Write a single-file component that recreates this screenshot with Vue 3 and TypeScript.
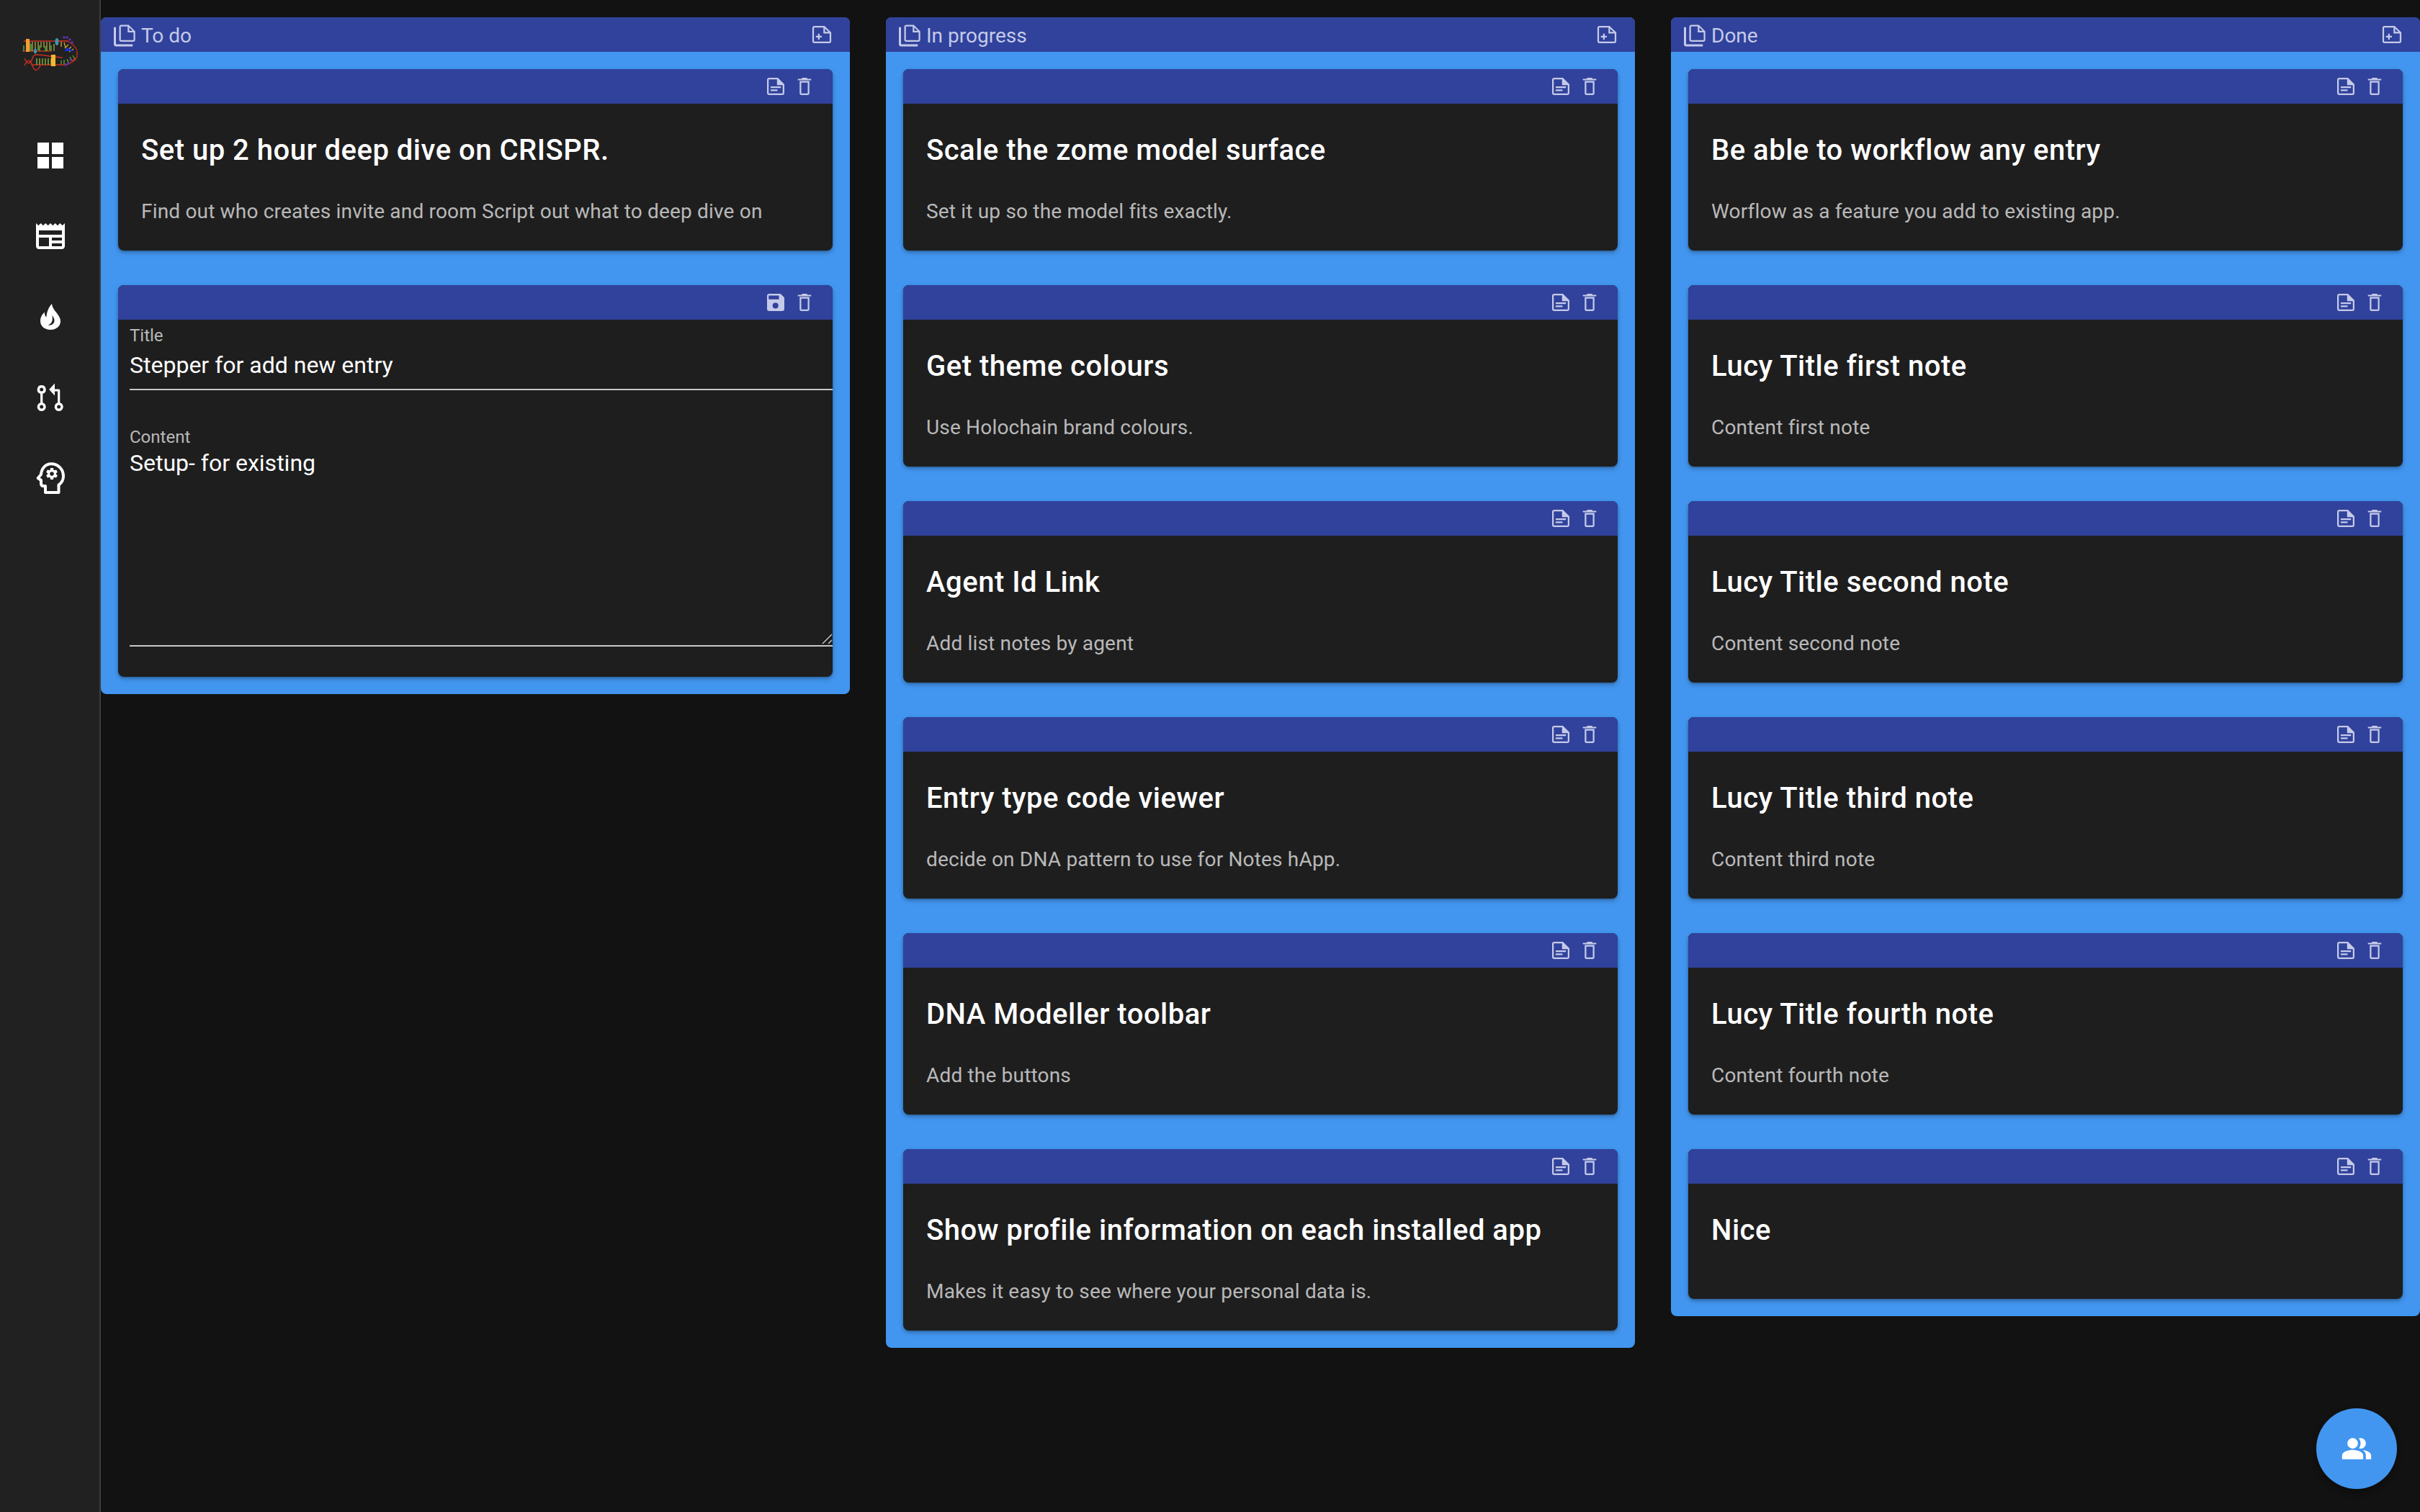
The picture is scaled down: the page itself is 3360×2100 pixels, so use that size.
<script setup lang="ts">
interface Note {
  title: string;
  content: string;
  editing?: boolean;
}
interface Column {
  name: string;
  notes: Note[];
}

const columns: Column[] = [
  {
    name: "To do",
    notes: [
      {
        title: "Set up 2 hour deep dive on CRISPR.",
        content: "Find out who creates invite and room Script out what to deep dive on",
      },
      { title: "Stepper for add new entry", content: "Setup- for existing", editing: true },
    ],
  },
  {
    name: "In progress",
    notes: [
      { title: "Scale the zome model surface", content: "Set it up so the model fits exactly." },
      { title: "Get theme colours", content: "Use Holochain brand colours." },
      { title: "Agent Id Link", content: "Add list notes by agent" },
      { title: "Entry type code viewer", content: "decide on DNA pattern to use for Notes hApp." },
      { title: "DNA Modeller toolbar", content: "Add the buttons" },
      {
        title: "Show profile information on each installed app",
        content: "Makes it easy to see where your personal data is.",
      },
    ],
  },
  {
    name: "Done",
    notes: [
      { title: "Be able to workflow any entry", content: "Worflow as a feature you add to existing app." },
      { title: "Lucy Title first note", content: "Content first note" },
      { title: "Lucy Title second note", content: "Content second note" },
      { title: "Lucy Title third note", content: "Content third note" },
      { title: "Lucy Title fourth note", content: "Content fourth note" },
      { title: "Nice", content: "" },
    ],
  },
];

const gridIcon = "M3 3h8v8H3zM13 3h8v8h-8zM3 13h8v8H3zM13 13h8v8h-8z";
const feedIcon =
  "M22 3l-1.67 1.67L18.67 3 17 4.67 15.33 3l-1.66 1.67L12 3l-1.67 1.67L8.67 3 7 4.67 5.33 3 3.67 4.67 2 3v16c0 1.1.9 2 2 2h16c1.1 0 2-.9 2-2V3zM11 19H4v-6h7v6zm9 0h-7v-2h7v2zm0-4h-7v-2h7v2zm0-4H4V8h16v3z";
const flameIcon =
  "M13 3c.4 3 2 4.5 3.5 6.5 1.500 2 2.500 3.700 2.500 5.500 0 3.600-3 6-7 6s-7-2.500-7-6c0-2.800 1.300-4.800 3-6.300-.2 1.500.3 2.800 1.200 3.500C9.500 8.600 10.800 5.200 13 3zM13.200 11c.2 1.200.3 2.300.1 3.500-.3 1.600-1.400 2.700-3 3.400 2.200.2 4.100-1 4.400-2.700.3-1.500-.5-2.900-1.500-4.200z";
const mergeIcon =
  "M5.850 3.500a3 3 0 0 0-.8 5.890v6.220a3 3 0 1 0 1.600 0V9.390a3 3 0 0 0-.8-5.890zm0 1.750a1.250 1.250 0 1 1 0 2.500 1.250 1.250 0 0 1 0-2.500zm0 12a1.250 1.250 0 1 1 0 2.500 1.250 1.250 0 0 1 0-2.500zM15 2.300L11.100 6.500 15 10.700V7.800h2.050v7.810a3 3 0 1 0 1.600 0V7.300c0-.7-.5-1-1-1H15zm2.850 14.950a1.250 1.250 0 1 1 0 2.500 1.250 1.250 0 0 1 0-2.500z";
const gearIcon =
  "M15.820 7.220l-1 .4c-.21-.16-.43-.29-.67-.39L14 6.170c-.02-.1-.1-.17-.2-.17h-1.600c-.1 0-.18.07-.19.17l-.15 1.060c-.24.1-.47.23-.67.39l-1-.4c-.09-.03-.2 0-.24.09l-.8 1.380c-.05.09-.03.2.05.26l.85.66c-.03.12-.05.26-.05.39s.01.26.03.39l-.84.66c-.08.06-.1.17-.05.25l.8 1.390c.05.09.15.12.25.09l.99-.4c.21.16.43.29.68.39l.14 1.060c.02.1.1.17.2.17h1.600c.1 0 .18-.07.2-.17l.15-1.060c.24-.1.47-.23.67-.39l.99.4c.09.04.2 0 .24-.09l.8-1.390c.05-.09.03-.19-.05-.25l-.83-.66c.02-.13.02-.26.02-.39 0-.14-.01-.27-.03-.39l.85-.66c.08-.06.1-.17.05-.26l-.8-1.380c-.05-.09-.16-.12-.25-.09zM13 11.430c-.79 0-1.430-.64-1.430-1.430s.64-1.430 1.430-1.430 1.430.64 1.430 1.430-.64 1.430-1.430 1.430z";
const headOutline =
  "M17 44V35h-3c-2 0-3-1.500-3-4v-4l-4.300-3L11 19c.5-8 6-14.700 14-14.700 9.500 0 17 7.200 17 17.200 0 5.500-3 9.500-6.500 12V44z";

const copyIcon =
  "M2 4.500h2v15.800h15.500v2H4c-1.100 0-2-.9-2-2zM15.800 2.300l6 6V16a2 2 0 0 1-2 2H9a2 2 0 0 1-2-2V4.300a2 2 0 0 1 2-2zM8.500 3.800v12.700h11.800V9.300h-5.500V3.800zM16.300 4.600v3.200h3.200z";
const addIcon =
  "M14.500 4l6.250 6v8a2 2 0 0 1-2 2H5.250a2 2 0 0 1-2-2V6a2 2 0 0 1 2-2zM4.750 5.500v13h14.500V11H13.500V5.500zM15 6.500v3h3.200zM8.500 11.200H10v2h2v1.500h-2v2H8.500v-2h-2v-1.500h2z";
const noteIcon =
  "M14 4l6 6v8a2 2 0 0 1-2 2H6a2 2 0 0 1-2-2V6a2 2 0 0 1 2-2zM5.500 5.500v13h13V10.800h-5.300V5.500zM7.300 12h9.500v1.500H7.300zM7.300 14.800h6.300v1.500H7.300z";
const deleteIcon =
  "M7.500 7h9v11.500c0 .8-.7 1.500-1.500 1.500H9c-.8 0-1.500-.7-1.500-1.500zM9 8.500v10h6v-10zM5.800 5H9l1-1h4l1 1h3.200v1.300H5.800z";
const saveIcon =
  "M16.500 4H6a2 2 0 0 0-2 2v12a2 2 0 0 0 2 2h12a2 2 0 0 0 2-2V7.500zM11.800 17.700a2.700 2.700 0 1 1 0-5.400 2.700 2.700 0 0 1 0 5.400zM15 9.100H5.500V5.600H15z";
const peopleIcon =
  "M16.670 13.130C18.040 14.060 19 15.320 19 17v3h4v-3c0-2.180-3.570-3.470-6.330-3.870zM9 4a4 4 0 1 0 0 8 4 4 0 0 0 0-8zM15 12c2.210 0 4-1.790 4-4s-1.790-4-4-4c-.47 0-.91.1-1.330.24C14.500 5.270 15 6.580 15 8s-.5 2.730-1.330 3.760c.42.14.86.24 1.330.24zM9 13c-2.670 0-8 1.340-8 4v3h16v-3c0-2.660-5.330-4-8-4z";
</script>

<template>
  <div class="app">
    <aside class="sidebar">
      <svg class="logo" viewBox="0 0 80 74">
        <path d="M4 24h62" stroke="#c62f22" stroke-width="1.500" fill="none" />
        <path d="M2 38h40" stroke="#b3301f" stroke-width="1.500" fill="none" />
        <path d="M8 24v14M12 25v13M16 25v13M20 25v13M24 25v12M28 25v8M32 25v8M36 25v13M40 25v12M46 28v10" stroke="#b8b24a" stroke-width="1.200" />
        <path d="M4 30v8M14 28v10M26 30v8M34 31v7M42 30v8" stroke="#55a833" stroke-width="1.500" />
        <rect x="7" y="21" width="5" height="18" fill="#f29c38" />
        <ellipse cx="50" cy="25" rx="2.500" ry="5" fill="#3d97ae" />
        <ellipse cx="20" cy="38" rx="2" ry="3.500" fill="#3d97ae" />
        <path d="M64 24c8 4 12 8 14 13M78 38v8l-7 6M52 24l12 0" stroke="#c62f22" stroke-width="1.300" fill="none" />
        <path d="M56 25v7M60 26l2 7M66 29l-5 5M70 32l-6 5M73 35l-6 4" stroke="#d6a637" stroke-width="1.300" />
        <path d="M60 38h14l-10-5z" fill="#1433d6" />
        <path d="M5 58c4-9 8-9 11 0s7 8 11 0M5 48c4 9 8 9 11 0s7-4 42-1" stroke="#c62f22" stroke-width="1.500" fill="none" />
        <path d="M14 57h46c6 0 12-4 17-8" stroke="#c62f22" stroke-width="1.500" fill="none" />
        <path d="M22 48v9M26 48v9M30 48v9M34 48v9M38 48v9M42 48v9M46 48v9" stroke="#8fbc3f" stroke-width="1.300" />
        <path d="M56 51v5M60 50v6M64 49l2 5M68 46l3 5M72 44l3 5" stroke="#55a833" stroke-width="1.300" />
        <rect x="42" y="43" width="6" height="16" fill="#f2b832" />
        <g fill="#6b2fb3">
          <circle cx="60" cy="19" r="1.700" /><circle cx="64" cy="19" r="1.700" /><circle cx="68" cy="22" r="1.700" /><circle cx="71" cy="26" r="1.700" />
          <circle cx="62" cy="57" r="1.700" /><circle cx="66" cy="55" r="1.700" /><circle cx="69" cy="50" r="1.700" />
        </g>
      </svg>
      <nav class="nav">
        <svg class="nav-icon" viewBox="0 0 24 24"><path :d="gridIcon" /></svg>
        <svg class="nav-icon" viewBox="0 0 24 24"><path :d="feedIcon" /></svg>
        <svg class="nav-icon" viewBox="0 0 24 24"><path fill-rule="evenodd" :d="flameIcon" /></svg>
        <svg class="nav-icon" viewBox="0 0 24 24"><path :d="mergeIcon" /></svg>
        <svg class="nav-icon" viewBox="0 0 48 48">
          <path class="head-line" :d="headOutline" />
          <path fill-rule="evenodd" transform="translate(0 -2) scale(2)" :d="gearIcon" />
        </svg>
      </nav>
    </aside>

    <main class="board">
      <section v-for="col in columns" :key="col.name" class="column">
        <header class="column-head">
          <svg class="head-icon" viewBox="0 0 24 24"><path fill-rule="evenodd" :d="copyIcon" /></svg>
          <span class="column-name">{{ col.name }}</span>
          <svg class="head-icon add" viewBox="0 0 24 24"><path fill-rule="evenodd" :d="addIcon" /></svg>
        </header>
        <div class="notes">
          <article v-for="note in col.notes" :key="note.title" class="note">
            <div class="note-bar">
              <svg class="bar-icon" viewBox="0 0 24 24"><path fill-rule="evenodd" :d="note.editing ? saveIcon : noteIcon" /></svg>
              <svg class="bar-icon" viewBox="0 0 24 24"><path fill-rule="evenodd" :d="deleteIcon" /></svg>
            </div>
            <form v-if="note.editing" class="note-form">
              <label class="field">
                <span class="field-label">Title</span>
                <input class="field-input" :value="note.title" />
              </label>
              <label class="field field-content">
                <span class="field-label">Content</span>
                <textarea class="field-area" :value="note.content"></textarea>
                <svg class="grip" viewBox="0 0 15 15">
                  <path d="M1 14L14 1M9 14l5-5" stroke="#000" stroke-width="3.500" />
                  <path d="M1 14L14 1M9 14l5-5" stroke="#a6a6a6" stroke-width="2" />
                </svg>
              </label>
            </form>
            <div v-else class="note-body">
              <h3 class="note-title">{{ note.title }}</h3>
              <p v-if="note.content" class="note-text">{{ note.content }}</p>
            </div>
          </article>
        </div>
      </section>
    </main>

    <button type="button" class="fab">
      <svg viewBox="0 0 24 24"><path :d="peopleIcon" /></svg>
    </button>
  </div>
</template>

<style>
html,
body {
  margin: 0;
  background: #121212;
}
</style>

<style scoped>
.app {
  display: flex;
  min-height: 2100px;
  background: #121212;
  font-family: Roboto, "Liberation Sans", sans-serif;
  color: #fff;
  overflow: hidden;
}

.sidebar {
  flex: none;
  box-sizing: border-box;
  width: 140px;
  background: #212121;
  border-right: 2px solid #3d3d3d;
  display: flex;
  flex-direction: column;
  align-items: center;
  padding: 33px 0 0 2px;
}

.logo {
  width: 80px;
  height: 74px;
  margin-left: -2px;
  display: block;
}

.nav {
  display: flex;
  flex-direction: column;
  align-items: center;
  gap: 64px;
  margin-top: 85px;
}

.nav-icon {
  width: 48px;
  height: 48px;
  fill: #fff;
  display: block;
}

.head-line {
  fill: none;
  stroke: #fff;
  stroke-width: 4;
  stroke-linejoin: round;
}

.board {
  display: grid;
  grid-template-columns: repeat(3, 1040px);
  column-gap: 50px;
  align-items: start;
  padding-top: 24px;
}

.column {
  background: #4296f0;
  border-radius: 8px;
  overflow: hidden;
}

.column-head {
  box-sizing: border-box;
  display: flex;
  align-items: center;
  height: 48px;
  background: #30429b;
  color: #c5cae9;
  padding: 2px 21px 0 15px;
}

.column-name {
  flex: 1;
  font-size: 28px;
  margin-left: 5px;
}

.head-icon {
  width: 36px;
  height: 36px;
  fill: #c5cae9;
  display: block;
}

.head-icon.add {
  margin-top: -2px;
}

.notes {
  display: flex;
  flex-direction: column;
  gap: 48px;
  padding: 24px;
}

.note {
  background: #1e1e1e;
  border-radius: 8px;
  overflow: hidden;
  box-shadow: 0 3px 6px rgba(0, 0, 0, 0.25), 0 1px 3px rgba(0, 0, 0, 0.2);
}

.note-bar {
  display: flex;
  justify-content: flex-end;
  align-items: center;
  gap: 4px;
  height: 48px;
  background: #30429b;
  padding-right: 21px;
}

.bar-icon {
  width: 36px;
  height: 36px;
  fill: #c5cae9;
  display: block;
}

.note-body {
  padding: 41px 32px 34px;
}

.note-title {
  margin: 0 0 37px;
  font-size: 40px;
  font-weight: 500;
  line-height: 48px;
  letter-spacing: 0.5px;
}

.note-text {
  margin: 0;
  padding-top: 4px;
  font-size: 28px;
  line-height: 40px;
  letter-spacing: 0.18px;
  color: rgba(255, 255, 255, 0.7);
}

.note-form {
  padding: 6px 0 42px 16px;
}

.field {
  position: relative;
  display: flex;
  flex-direction: column;
  border-bottom: 2px solid #c8c8c8;
}

.field-label {
  font-size: 24px;
  line-height: 32px;
  color: rgba(255, 255, 255, 0.7);
}

.field-input,
.field-area {
  font: inherit;
  font-size: 32px;
  color: #fff;
  background: transparent;
  border: 0;
  outline: 0;
  padding: 0;
  margin: 0;
}

.field-input {
  height: 46px;
  line-height: 46px;
  margin: 2px 0 10px;
}

.field-content {
  margin-top: 49px;
}

.field-area {
  height: 272px;
  margin-top: 1px;
  line-height: 38px;
  resize: none;
  display: block;
}

.grip {
  position: absolute;
  right: 0;
  bottom: 1px;
  width: 15px;
  height: 15px;
}

.fab {
  position: fixed;
  right: 32px;
  bottom: 32px;
  width: 112px;
  height: 112px;
  padding: 0;
  border: 0;
  border-radius: 50%;
  background: #4296f0;
  display: flex;
  align-items: center;
  justify-content: center;
  box-shadow: 0 6px 10px rgba(0, 0, 0, 0.3);
}

.fab svg {
  width: 44px;
  height: 44px;
  fill: #fff;
}
</style>
